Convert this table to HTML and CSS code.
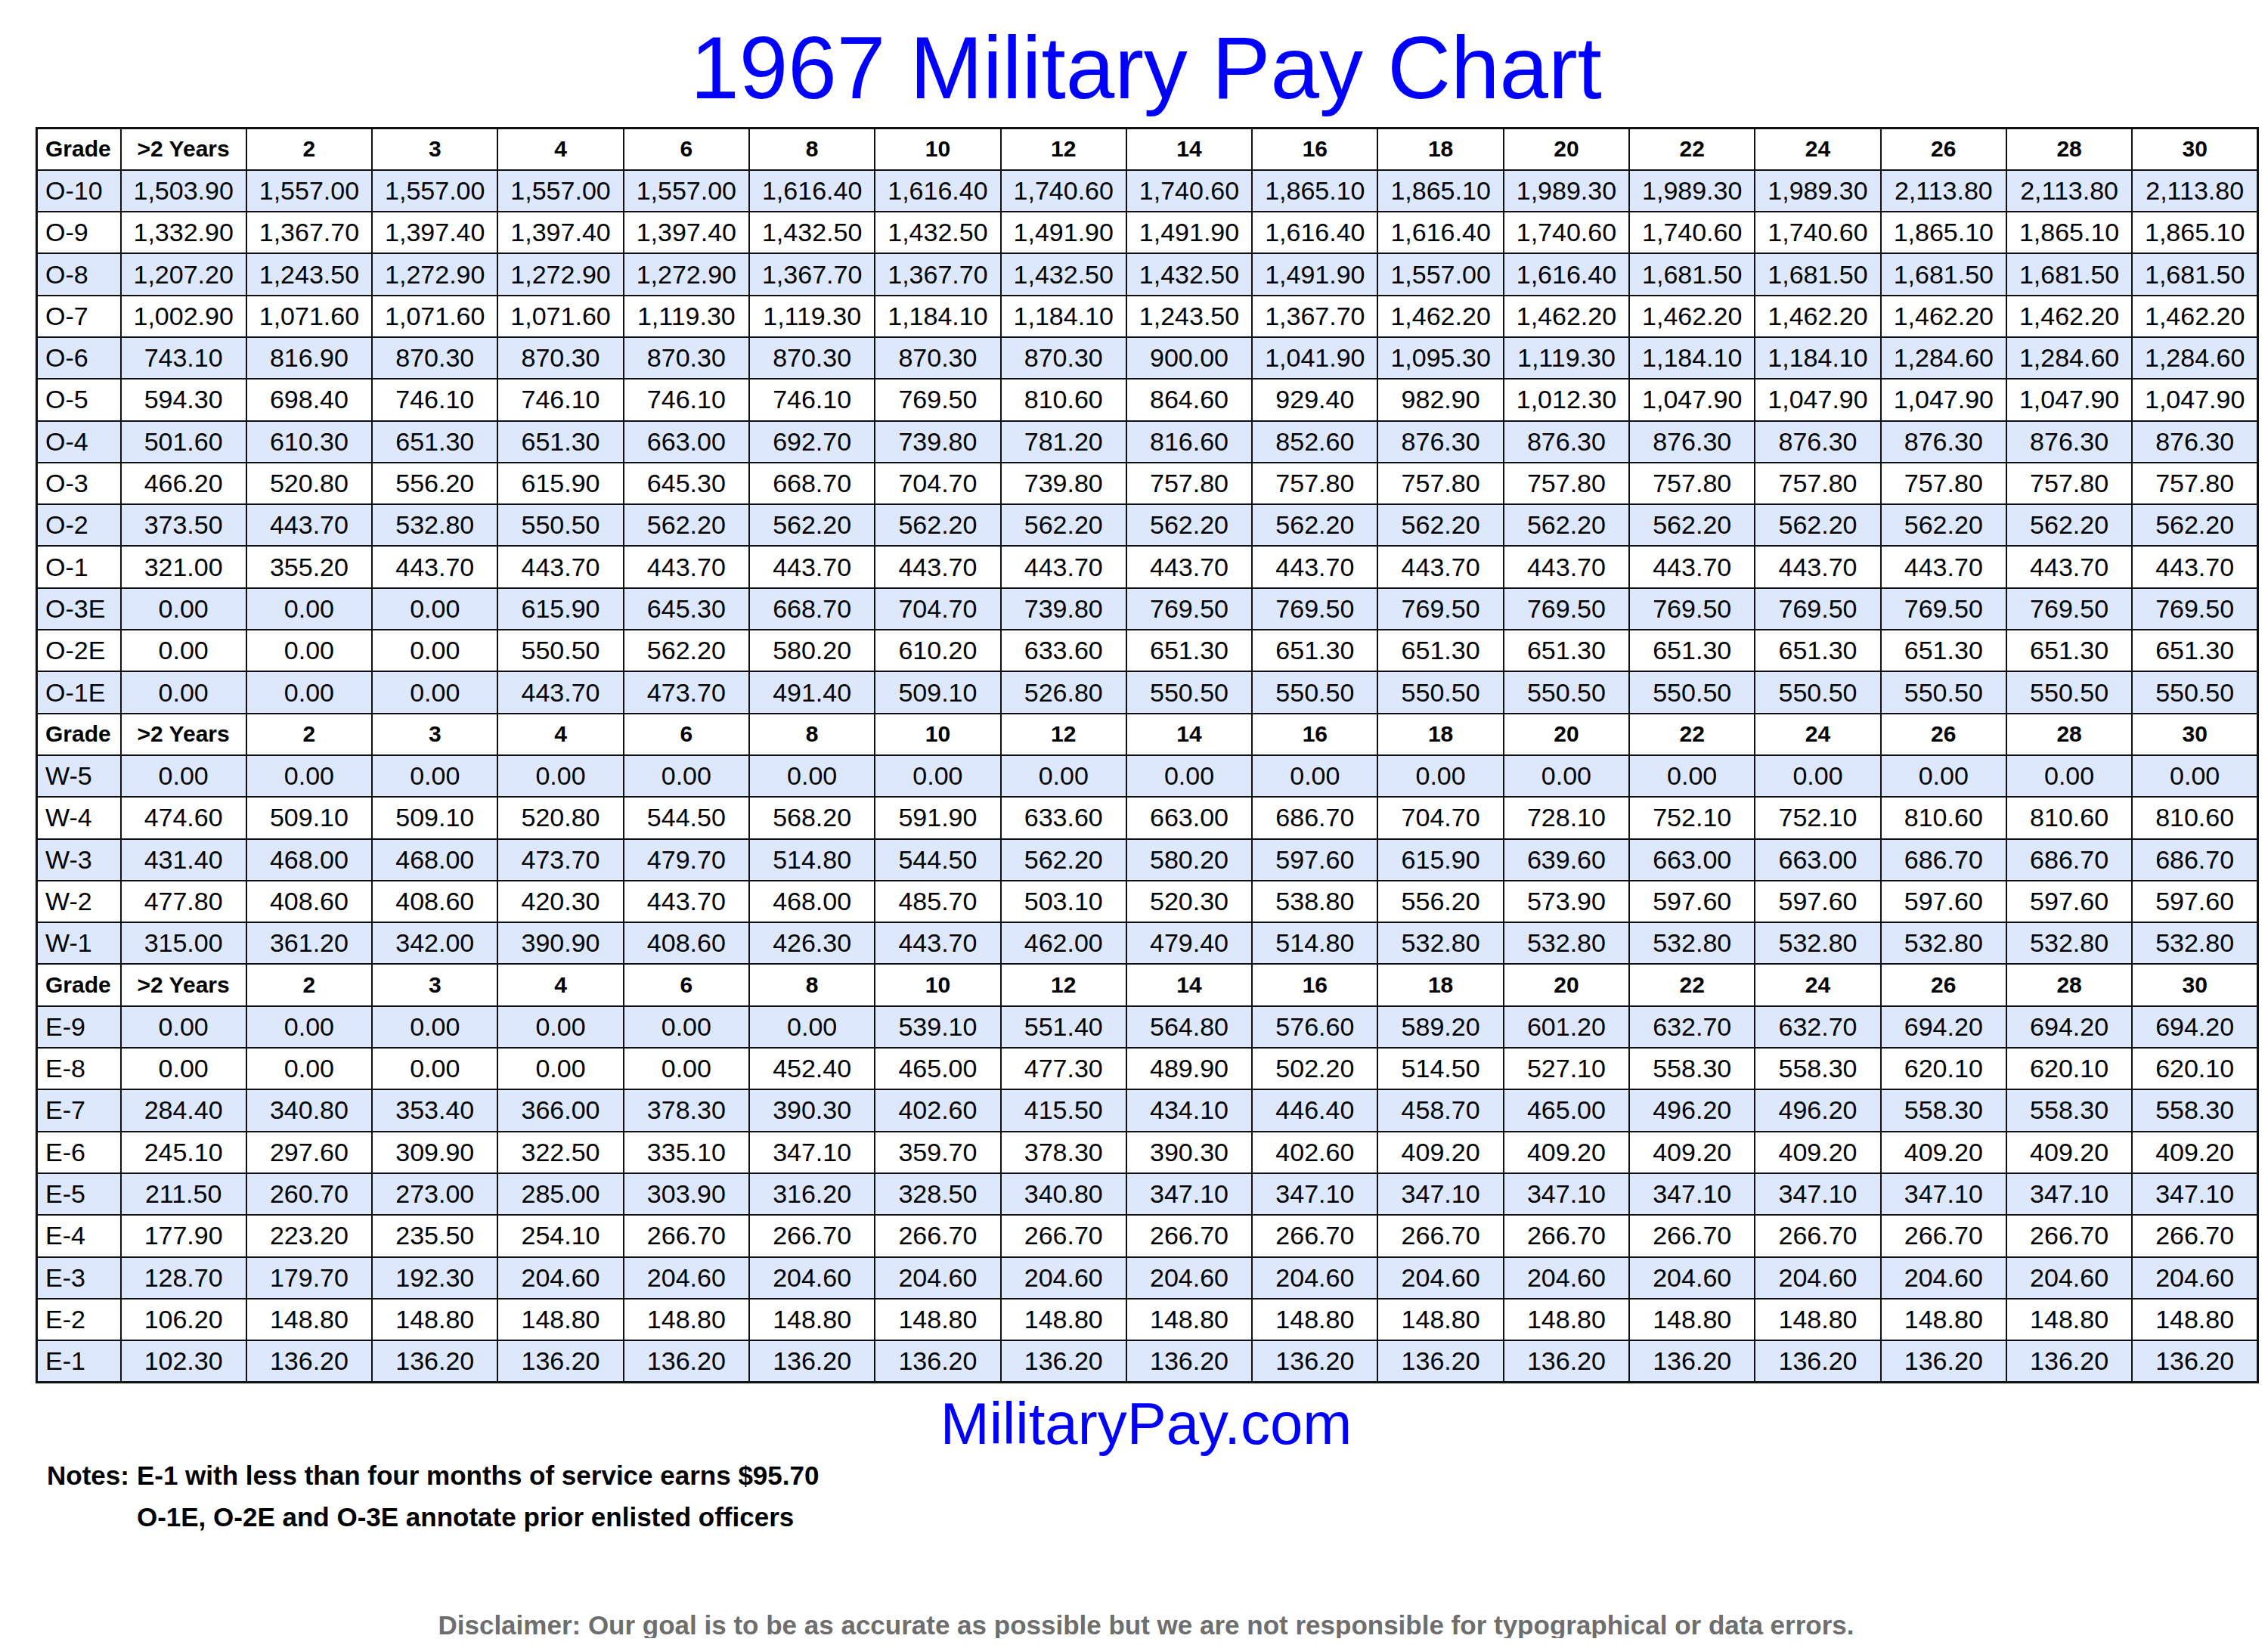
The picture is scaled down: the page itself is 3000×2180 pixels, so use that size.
FILE: index.html
```html
<!DOCTYPE html>
<html lang="en">
<head>
<meta charset="utf-8">
<title>1967 Military Pay Chart</title>
<link rel="stylesheet" href="styles.css">
</head>
<body>
<div class="page">
<h1 class="title">1967 Military Pay Chart</h1>
<table class="chart">
<colgroup><col class="c-grade"><col span="17" class="c-val"></colgroup>
<tbody>
<tr class="head"><th class="g">Grade</th><th>&gt;2 Years</th><th>2</th><th>3</th><th>4</th><th>6</th><th>8</th><th>10</th><th>12</th><th>14</th><th>16</th><th>18</th><th>20</th><th>22</th><th>24</th><th>26</th><th>28</th><th>30</th></tr>
<tr class="alt"><td class="g">O-10</td><td>1,503.90</td><td>1,557.00</td><td>1,557.00</td><td>1,557.00</td><td>1,557.00</td><td>1,616.40</td><td>1,616.40</td><td>1,740.60</td><td>1,740.60</td><td>1,865.10</td><td>1,865.10</td><td>1,989.30</td><td>1,989.30</td><td>1,989.30</td><td>2,113.80</td><td>2,113.80</td><td>2,113.80</td></tr>
<tr><td class="g">O-9</td><td>1,332.90</td><td>1,367.70</td><td>1,397.40</td><td>1,397.40</td><td>1,397.40</td><td>1,432.50</td><td>1,432.50</td><td>1,491.90</td><td>1,491.90</td><td>1,616.40</td><td>1,616.40</td><td>1,740.60</td><td>1,740.60</td><td>1,740.60</td><td>1,865.10</td><td>1,865.10</td><td>1,865.10</td></tr>
<tr class="alt"><td class="g">O-8</td><td>1,207.20</td><td>1,243.50</td><td>1,272.90</td><td>1,272.90</td><td>1,272.90</td><td>1,367.70</td><td>1,367.70</td><td>1,432.50</td><td>1,432.50</td><td>1,491.90</td><td>1,557.00</td><td>1,616.40</td><td>1,681.50</td><td>1,681.50</td><td>1,681.50</td><td>1,681.50</td><td>1,681.50</td></tr>
<tr><td class="g">O-7</td><td>1,002.90</td><td>1,071.60</td><td>1,071.60</td><td>1,071.60</td><td>1,119.30</td><td>1,119.30</td><td>1,184.10</td><td>1,184.10</td><td>1,243.50</td><td>1,367.70</td><td>1,462.20</td><td>1,462.20</td><td>1,462.20</td><td>1,462.20</td><td>1,462.20</td><td>1,462.20</td><td>1,462.20</td></tr>
<tr class="alt"><td class="g">O-6</td><td>743.10</td><td>816.90</td><td>870.30</td><td>870.30</td><td>870.30</td><td>870.30</td><td>870.30</td><td>870.30</td><td>900.00</td><td>1,041.90</td><td>1,095.30</td><td>1,119.30</td><td>1,184.10</td><td>1,184.10</td><td>1,284.60</td><td>1,284.60</td><td>1,284.60</td></tr>
<tr><td class="g">O-5</td><td>594.30</td><td>698.40</td><td>746.10</td><td>746.10</td><td>746.10</td><td>746.10</td><td>769.50</td><td>810.60</td><td>864.60</td><td>929.40</td><td>982.90</td><td>1,012.30</td><td>1,047.90</td><td>1,047.90</td><td>1,047.90</td><td>1,047.90</td><td>1,047.90</td></tr>
<tr class="alt"><td class="g">O-4</td><td>501.60</td><td>610.30</td><td>651.30</td><td>651.30</td><td>663.00</td><td>692.70</td><td>739.80</td><td>781.20</td><td>816.60</td><td>852.60</td><td>876.30</td><td>876.30</td><td>876.30</td><td>876.30</td><td>876.30</td><td>876.30</td><td>876.30</td></tr>
<tr><td class="g">O-3</td><td>466.20</td><td>520.80</td><td>556.20</td><td>615.90</td><td>645.30</td><td>668.70</td><td>704.70</td><td>739.80</td><td>757.80</td><td>757.80</td><td>757.80</td><td>757.80</td><td>757.80</td><td>757.80</td><td>757.80</td><td>757.80</td><td>757.80</td></tr>
<tr class="alt"><td class="g">O-2</td><td>373.50</td><td>443.70</td><td>532.80</td><td>550.50</td><td>562.20</td><td>562.20</td><td>562.20</td><td>562.20</td><td>562.20</td><td>562.20</td><td>562.20</td><td>562.20</td><td>562.20</td><td>562.20</td><td>562.20</td><td>562.20</td><td>562.20</td></tr>
<tr><td class="g">O-1</td><td>321.00</td><td>355.20</td><td>443.70</td><td>443.70</td><td>443.70</td><td>443.70</td><td>443.70</td><td>443.70</td><td>443.70</td><td>443.70</td><td>443.70</td><td>443.70</td><td>443.70</td><td>443.70</td><td>443.70</td><td>443.70</td><td>443.70</td></tr>
<tr class="alt"><td class="g">O-3E</td><td>0.00</td><td>0.00</td><td>0.00</td><td>615.90</td><td>645.30</td><td>668.70</td><td>704.70</td><td>739.80</td><td>769.50</td><td>769.50</td><td>769.50</td><td>769.50</td><td>769.50</td><td>769.50</td><td>769.50</td><td>769.50</td><td>769.50</td></tr>
<tr><td class="g">O-2E</td><td>0.00</td><td>0.00</td><td>0.00</td><td>550.50</td><td>562.20</td><td>580.20</td><td>610.20</td><td>633.60</td><td>651.30</td><td>651.30</td><td>651.30</td><td>651.30</td><td>651.30</td><td>651.30</td><td>651.30</td><td>651.30</td><td>651.30</td></tr>
<tr class="alt"><td class="g">O-1E</td><td>0.00</td><td>0.00</td><td>0.00</td><td>443.70</td><td>473.70</td><td>491.40</td><td>509.10</td><td>526.80</td><td>550.50</td><td>550.50</td><td>550.50</td><td>550.50</td><td>550.50</td><td>550.50</td><td>550.50</td><td>550.50</td><td>550.50</td></tr>
<tr class="head"><th class="g">Grade</th><th>&gt;2 Years</th><th>2</th><th>3</th><th>4</th><th>6</th><th>8</th><th>10</th><th>12</th><th>14</th><th>16</th><th>18</th><th>20</th><th>22</th><th>24</th><th>26</th><th>28</th><th>30</th></tr>
<tr class="alt"><td class="g">W-5</td><td>0.00</td><td>0.00</td><td>0.00</td><td>0.00</td><td>0.00</td><td>0.00</td><td>0.00</td><td>0.00</td><td>0.00</td><td>0.00</td><td>0.00</td><td>0.00</td><td>0.00</td><td>0.00</td><td>0.00</td><td>0.00</td><td>0.00</td></tr>
<tr><td class="g">W-4</td><td>474.60</td><td>509.10</td><td>509.10</td><td>520.80</td><td>544.50</td><td>568.20</td><td>591.90</td><td>633.60</td><td>663.00</td><td>686.70</td><td>704.70</td><td>728.10</td><td>752.10</td><td>752.10</td><td>810.60</td><td>810.60</td><td>810.60</td></tr>
<tr class="alt"><td class="g">W-3</td><td>431.40</td><td>468.00</td><td>468.00</td><td>473.70</td><td>479.70</td><td>514.80</td><td>544.50</td><td>562.20</td><td>580.20</td><td>597.60</td><td>615.90</td><td>639.60</td><td>663.00</td><td>663.00</td><td>686.70</td><td>686.70</td><td>686.70</td></tr>
<tr><td class="g">W-2</td><td>477.80</td><td>408.60</td><td>408.60</td><td>420.30</td><td>443.70</td><td>468.00</td><td>485.70</td><td>503.10</td><td>520.30</td><td>538.80</td><td>556.20</td><td>573.90</td><td>597.60</td><td>597.60</td><td>597.60</td><td>597.60</td><td>597.60</td></tr>
<tr class="alt"><td class="g">W-1</td><td>315.00</td><td>361.20</td><td>342.00</td><td>390.90</td><td>408.60</td><td>426.30</td><td>443.70</td><td>462.00</td><td>479.40</td><td>514.80</td><td>532.80</td><td>532.80</td><td>532.80</td><td>532.80</td><td>532.80</td><td>532.80</td><td>532.80</td></tr>
<tr class="head"><th class="g">Grade</th><th>&gt;2 Years</th><th>2</th><th>3</th><th>4</th><th>6</th><th>8</th><th>10</th><th>12</th><th>14</th><th>16</th><th>18</th><th>20</th><th>22</th><th>24</th><th>26</th><th>28</th><th>30</th></tr>
<tr class="alt"><td class="g">E-9</td><td>0.00</td><td>0.00</td><td>0.00</td><td>0.00</td><td>0.00</td><td>0.00</td><td>539.10</td><td>551.40</td><td>564.80</td><td>576.60</td><td>589.20</td><td>601.20</td><td>632.70</td><td>632.70</td><td>694.20</td><td>694.20</td><td>694.20</td></tr>
<tr><td class="g">E-8</td><td>0.00</td><td>0.00</td><td>0.00</td><td>0.00</td><td>0.00</td><td>452.40</td><td>465.00</td><td>477.30</td><td>489.90</td><td>502.20</td><td>514.50</td><td>527.10</td><td>558.30</td><td>558.30</td><td>620.10</td><td>620.10</td><td>620.10</td></tr>
<tr class="alt"><td class="g">E-7</td><td>284.40</td><td>340.80</td><td>353.40</td><td>366.00</td><td>378.30</td><td>390.30</td><td>402.60</td><td>415.50</td><td>434.10</td><td>446.40</td><td>458.70</td><td>465.00</td><td>496.20</td><td>496.20</td><td>558.30</td><td>558.30</td><td>558.30</td></tr>
<tr><td class="g">E-6</td><td>245.10</td><td>297.60</td><td>309.90</td><td>322.50</td><td>335.10</td><td>347.10</td><td>359.70</td><td>378.30</td><td>390.30</td><td>402.60</td><td>409.20</td><td>409.20</td><td>409.20</td><td>409.20</td><td>409.20</td><td>409.20</td><td>409.20</td></tr>
<tr class="alt"><td class="g">E-5</td><td>211.50</td><td>260.70</td><td>273.00</td><td>285.00</td><td>303.90</td><td>316.20</td><td>328.50</td><td>340.80</td><td>347.10</td><td>347.10</td><td>347.10</td><td>347.10</td><td>347.10</td><td>347.10</td><td>347.10</td><td>347.10</td><td>347.10</td></tr>
<tr><td class="g">E-4</td><td>177.90</td><td>223.20</td><td>235.50</td><td>254.10</td><td>266.70</td><td>266.70</td><td>266.70</td><td>266.70</td><td>266.70</td><td>266.70</td><td>266.70</td><td>266.70</td><td>266.70</td><td>266.70</td><td>266.70</td><td>266.70</td><td>266.70</td></tr>
<tr class="alt"><td class="g">E-3</td><td>128.70</td><td>179.70</td><td>192.30</td><td>204.60</td><td>204.60</td><td>204.60</td><td>204.60</td><td>204.60</td><td>204.60</td><td>204.60</td><td>204.60</td><td>204.60</td><td>204.60</td><td>204.60</td><td>204.60</td><td>204.60</td><td>204.60</td></tr>
<tr><td class="g">E-2</td><td>106.20</td><td>148.80</td><td>148.80</td><td>148.80</td><td>148.80</td><td>148.80</td><td>148.80</td><td>148.80</td><td>148.80</td><td>148.80</td><td>148.80</td><td>148.80</td><td>148.80</td><td>148.80</td><td>148.80</td><td>148.80</td><td>148.80</td></tr>
<tr class="alt"><td class="g">E-1</td><td>102.30</td><td>136.20</td><td>136.20</td><td>136.20</td><td>136.20</td><td>136.20</td><td>136.20</td><td>136.20</td><td>136.20</td><td>136.20</td><td>136.20</td><td>136.20</td><td>136.20</td><td>136.20</td><td>136.20</td><td>136.20</td><td>136.20</td></tr>
</tbody>
</table>
<div class="site">MilitaryPay.com</div>
<div class="notes">
<div class="notes-label">Notes:</div>
<div class="notes-lines">
<div>E-1 with less than four months of service earns $95.70</div>
<div>O-1E, O-2E and O-3E annotate prior enlisted officers</div>
</div>
</div>
<div class="disclaimer">Disclaimer: Our goal is to be as accurate as possible but we are not responsible for typographical or data errors.</div>
</div>
</body>
</html>
```

FILE: styles.css
```css
html, body {
  margin: 0;
  padding: 0;
  background: #ffffff;
}

body {
  font-family: "Liberation Sans", Arial, Helvetica, sans-serif;
  color: #000000;
}

.page {
  width: 2938px;
  margin-left: 47px;
}

.title {
  margin: 32px 0 20px;
  font-size: 116px;
  line-height: 1;
  font-weight: normal;
  color: #0000ff;
  text-align: center;
}

.chart {
  width: 2938px;
  table-layout: fixed;
  border-collapse: collapse;
  border: 3px solid #111111;
}

.c-grade {
  width: 111px;
}

.c-val {
  width: 166.3px;
}

.chart tr {
  height: 55.3px;
}

.chart th,
.chart td {
  border: 2px solid #111111;
  padding: 0;
  text-align: center;
  vertical-align: middle;
  white-space: nowrap;
  overflow: hidden;
}

.chart th {
  font-size: 30px;
  font-weight: bold;
}

.chart td {
  font-size: 34px;
  font-weight: normal;
}

.chart .g {
  text-align: left;
  padding-left: 10px;
}

.chart tr.alt td {
  background: #dde8fc;
}

.site {
  margin-top: 14px;
  font-size: 78px;
  line-height: 1;
  color: #0000ff;
  text-align: center;
}

.notes {
  display: flex;
  gap: 10px;
  margin-top: 2px;
  padding-left: 15px;
  font-size: 35px;
  font-weight: bold;
  line-height: 55px;
}

.disclaimer {
  margin-top: 98px;
  font-size: 35px;
  font-weight: bold;
  line-height: 1;
  color: #6e6e6e;
  text-align: center;
}
```
